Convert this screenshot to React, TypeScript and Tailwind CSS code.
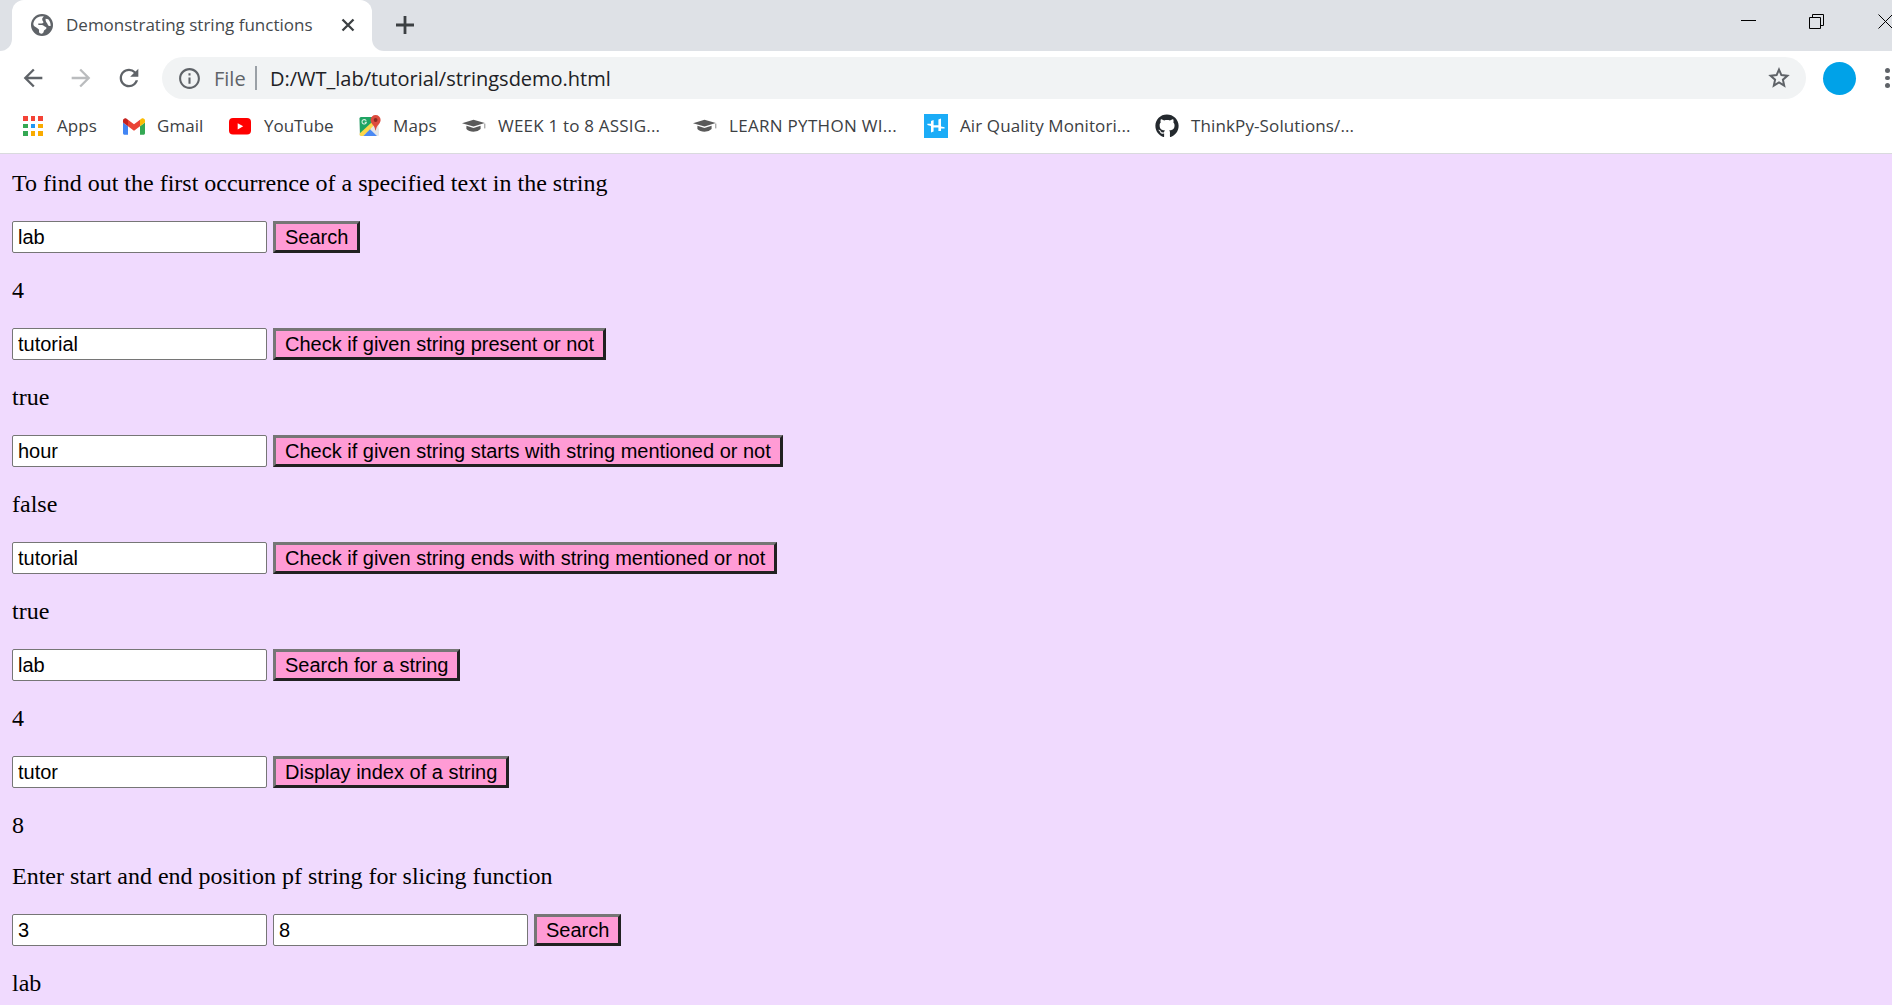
import React from "react";
import {
  MdArrowBack,
  MdArrowForward,
  MdRefresh,
  MdInfoOutline,
} from "react-icons/md";
import { FaGithub } from "react-icons/fa";

const GlobeIcon = () => (
  <svg viewBox="0 0 22 22" className="h-[22px] w-[22px]">
    <circle cx="11" cy="11" r="11" fill="#5f6368" />
    <path
      d="M2.3 10C2.6 6.4 5.4 3.2 9 2.4L12.8 2.3C12.2 3.4 11.2 4 11.2 5.2C11.2 7 12.4 7 12.4 8.2C12.4 9.4 11 9.4 9.4 9.4H7.6C6.8 9.4 7 11 8 11H10.8C12.6 11 12.8 12.4 14.2 12.8C16 13.4 15.8 14.8 14.4 15.6C13 16.2 12.8 16.8 12.6 18.2L11 19.8C8.8 19.6 7.8 18.8 8 17.2C8.2 15.6 8 15.2 6.4 14.2C4.6 13 2.4 12.2 2.3 10Z"
      fill="#fff"
    />
    <path d="M14.6 4.8L17.2 5.2C19 7.2 19.8 9.4 19.6 12C18 12 16.8 11.6 16.6 10.2C16.4 8.8 14.2 8 14.6 4.8Z" fill="#fff" />
  </svg>
);

const AppsIcon = () => (
  <span className="grid h-[20px] w-[20px] grid-cols-3 gap-[3px]">
    <i className="bg-[#f44336]" />
    <i className="bg-[#f44336]" />
    <i className="bg-[#f44336]" />
    <i className="bg-[#34a853]" />
    <i className="bg-[#2196f3]" />
    <i className="bg-[#f9ab00]" />
    <i className="bg-[#34a853]" />
    <i className="bg-[#f9ab00]" />
    <i className="bg-[#f9ab00]" />
  </span>
);

const GmailIcon = () => (
  <svg viewBox="52 42 88 66" className="h-[17px] w-[22px]">
    <path fill="#4285f4" d="M58 108h14V74L52 59v43c0 3.32 2.69 6 6 6" />
    <path fill="#34a853" d="M120 108h14c3.32 0 6-2.69 6-6V59l-20 15" />
    <path fill="#fbbc04" d="M120 48v26l20-15v-8c0-7.42-8.47-11.65-14.4-7.2" />
    <path fill="#ea4335" d="M72 74V48l24 18 24-18v26L96 92" />
    <path fill="#c5221f" d="M52 51v8l20 15V48l-5.6-4.2c-5.94-4.45-14.4-.22-14.4 7.2" />
  </svg>
);

const YouTubeIcon = () => (
  <svg viewBox="0 0 22 17" className="h-[17px] w-[22px]">
    <rect width="22" height="16.5" rx="4" fill="#f00" />
    <path d="M8.7 5.2L14.2 8.3L8.7 11.4Z" fill="#fff" />
  </svg>
);

const MapsIcon = () => (
  <svg viewBox="0 0 22 22" className="h-[22px] w-[22px]">
    <rect x="0.5" y="2" width="19" height="19" rx="1.5" fill="#e4e6e8" />
    <path d="M0.5 3.5Q0.5 2 2 2H13.5L14.5 7L1 20Z" fill="#1fa463" />
    <path d="M0.6 18.6L12.6 7.4L15.4 10.4L4.6 21H2Q0.6 21 0.6 19.6Z" fill="#fdd74a" />
    <path d="M4.4 21L11 14.2L18 21Z" fill="#4a89f3" />
    <path d="M11.6 13.6L15 10.2L20 14V20.4L18.8 21Z" fill="#e4e6e8" />
    <path d="M7.2 5.8A2.2 2.2 0 1 0 7.4 7.2H5.6" fill="none" stroke="#d5eee0" strokeWidth="1.1" />
    <path d="M16.6 0A5 5 0 0 0 11.6 5C11.6 9 15.8 10 16.4 15.5H16.8C17.4 10 21.6 9 21.6 5A5 5 0 0 0 16.6 0Z" fill="#dc4b3e" />
    <circle cx="16.6" cy="5" r="1.9" fill="#8a2a22" />
  </svg>
);

const CapIcon = () => (
  <svg viewBox="0 0 24 14" className="h-[14px] w-[24px]">
    <path d="M0 4.2L11.5 0.7L22.8 4L11.5 7.6Z" fill="#5a5a5a" />
    <path d="M4.4 6.8L11.5 9L18.6 6.8V10Q16 12.8 11.5 12.8Q7 12.8 4.4 10Z" fill="#5a5a5a" />
    <path d="M22.8 4.6V9.4" stroke="#8a8a8a" strokeWidth="1" />
  </svg>
);

const HacksterIcon = () => (
  <svg viewBox="0 0 24 24" className="h-6 w-6">
    <rect width="24" height="24" fill="#1bacf7" />
    <path
      d="M7 7L9.6 6V11.2H14.4V5.6L17 4.6V12.4L20.6 13.2V14.4H17V17H14.4V13.6H9.6V17.4L7 18.6V12L3.4 11V9.8H7Z"
      fill="#fff"
    />
  </svg>
);

const StarIcon = ({ className }: { className: string }) => (
  <svg viewBox="0 0 22 22" className={className} fill="none" stroke="#5f6368" strokeWidth="2">
    <path d="M11 2.6L13.4 8.1L19.4 8.7L14.9 12.7L16.2 18.6L11 15.5L5.8 18.6L7.1 12.7L2.6 8.7L8.6 8.1Z" />
  </svg>
);

type Bookmark = { icon: React.ReactNode; label: string; box: string; text: string };

const bookmarks: Bookmark[] = [
  { icon: <AppsIcon />, label: "Apps", box: "w-[100px]", text: "-ml-px tracking-[0.1px]" },
  { icon: <GmailIcon />, label: "Gmail", box: "w-[106px]", text: "-ml-px tracking-[0.05px]" },
  { icon: <YouTubeIcon />, label: "YouTube", box: "w-[130px]", text: "tracking-[-0.05px]" },
  { icon: <MapsIcon />, label: "Maps", box: "w-[103px]", text: "-ml-px tracking-[0.1px]" },
  { icon: <CapIcon />, label: "WEEK 1 to 8 ASSIG...", box: "w-[231px]", text: "ml-px tracking-[0.2px]" },
  { icon: <CapIcon />, label: "LEARN PYTHON WI...", box: "w-[231px]", text: "ml-px tracking-[0.3px]" },
  { icon: <HacksterIcon />, label: "Air Quality Monitori...", box: "w-[231px]", text: "ml-px tracking-[0.1px]" },
  { icon: <FaGithub className="h-6 w-6 text-[#24292e]" />, label: "ThinkPy-Solutions/...", box: "w-[231px]", text: "ml-px tracking-[0.12px]" },
];

const TabStrip = () => (
  <div className="flex h-[51px] bg-[#dee1e6]">
    <div className="w-3 bg-white">
      <div className="h-full rounded-br-[12px] bg-[#dee1e6]" />
    </div>
    <div className="w-[360px] rounded-t-[12px] bg-white">
      <div className="flex h-[49px] items-center pl-[19px]">
        <GlobeIcon />
        <span className="ml-[13px] w-[275px] whitespace-nowrap text-[17px] leading-6 text-[#45494d]">
          Demonstrating string functions
        </span>
        <svg viewBox="0 0 14 14" className="h-[14px] w-[14px]">
          <path d="M1.5 1.5L12.5 12.5M12.5 1.5L1.5 12.5" stroke="#3c4043" strokeWidth="2.3" />
        </svg>
      </div>
    </div>
    <div className="w-[24px] bg-white">
      <div className="h-full rounded-bl-[12px] bg-[#dee1e6]" />
    </div>
    <svg viewBox="0 0 18 18" className="mt-4 h-[18px] w-[18px]">
      <path d="M9 0V18M0 9H18" stroke="#3c4043" strokeWidth="2.8" />
    </svg>
    <div className="ml-auto flex h-[43px] w-[151px] items-center gap-[53px] overflow-hidden">
      <svg viewBox="0 0 15 15" className="h-[15px] w-[15px] shrink-0">
        <path d="M0 6.5H15" stroke="#000" />
      </svg>
      <svg viewBox="0 0 15 15" className="h-[15px] w-[15px] shrink-0" fill="none" stroke="#000">
        <path d="M0.5 3.5H11.5V14.5H0.5ZM3.5 3.5V0.5H14.5V11.5H11.5" />
      </svg>
      <svg viewBox="0 0 15 15" className="ml-px h-[15px] w-[15px] shrink-0">
        <path d="M0.5 0.5L14.5 14.5M14.5 0.5L0.5 14.5" stroke="#000" />
      </svg>
    </div>
  </div>
);

const Toolbar = () => (
  <div className="flex h-[54px] items-center pl-[19px] text-[#5f6368]">
    <MdArrowBack className="h-7 w-7" />
    <MdArrowForward className="ml-5 h-7 w-7 text-[#babcbe]" />
    <MdRefresh className="ml-5 h-7 w-7" />
    <div className="ml-[19px] flex h-[42px] w-[1644px] items-center rounded-full bg-[#f1f3f4] pl-[15px] pr-4">
      <MdInfoOutline className="h-[25px] w-[25px]" />
      <span className="ml-3 mt-[2px] w-[41px] text-[20px] leading-6">File</span>
      <span className="h-6 w-[2px] bg-[#9aa0a6]" />
      <span className="ml-[13px] mt-[2px] whitespace-nowrap text-[20px] leading-6 tracking-[-0.01px] text-[#202124]">
        D:/WT_lab/tutorial/stringsdemo.html
      </span>
      <StarIcon className="ml-auto h-[22px] w-[22px]" />
    </div>
    <span className="ml-[17px] h-[33px] w-[33px] rounded-full bg-[#00a2e8]" />
    <span className="ml-[29px] flex flex-col gap-[3px]">
      <i className="h-[4.5px] w-[4.5px] rounded-full bg-[#5f6368]" />
      <i className="h-[4.5px] w-[4.5px] rounded-full bg-[#5f6368]" />
      <i className="h-[4.5px] w-[4.5px] rounded-full bg-[#5f6368]" />
    </span>
  </div>
);

const BookmarksBar = () => (
  <div className="flex h-[49px] items-center border-b border-[#d9dadd] pb-[6px] pl-[23px]">
    {bookmarks.map((b) => (
      <div key={b.label} className={`flex shrink-0 items-center ${b.box}`}>
        <span className="flex w-[35px] shrink-0 items-center">{b.icon}</span>
        <span className={`whitespace-nowrap text-[17px] leading-6 text-[#3c4043] ${b.text}`}>{b.label}</span>
      </div>
    ))}
  </div>
);

const Field = ({ value }: { value: string }) => (
  <input
    defaultValue={value}
    className="h-8 w-[255px] rounded-[2px] border border-[#767676] bg-white px-[5px] text-[20px] leading-6 text-black"
  />
);

const Action = ({ label }: { label: string }) => (
  <button className="h-8 whitespace-nowrap border-[3px] border-b-[#212121] border-l-[#767676] border-r-[#212121] border-t-[#767676] bg-[#ff9bd5] px-[9px] text-[20px] leading-[26px] text-black">
    {label}
  </button>
);

const Row = ({ values, label }: { values: string[]; label: string }) => (
  <div className="mt-6 flex gap-[6px] font-['Liberation_Sans',sans-serif]">
    {values.map((v) => (
      <Field key={v} value={v} />
    ))}
    <Action label={label} />
  </div>
);

const checks = [
  { value: "lab", label: "Search", result: "4" },
  { value: "tutorial", label: "Check if given string present or not", result: "true" },
  { value: "hour", label: "Check if given string starts with string mentioned or not", result: "false" },
  { value: "tutorial", label: "Check if given string ends with string mentioned or not", result: "true" },
  { value: "lab", label: "Search for a string", result: "4" },
  { value: "tutor", label: "Display index of a string", result: "8" },
];

export default function App() {
  return (
    <div className="flex h-[1005px] w-[1892px] flex-col overflow-hidden bg-white">
      <header className="shrink-0 font-['Open_Sans',sans-serif]">
        <TabStrip />
        <Toolbar />
        <BookmarksBar />
      </header>
      <main className="flex-1 bg-[#f0dafe] pl-3 pt-4 font-['Liberation_Serif',serif] text-[24px] leading-[27px] text-black">
        <p>To find out the first occurrence of a specified text in the string</p>
        {checks.map((c, i) => (
          <section key={i}>
            <Row values={[c.value]} label={c.label} />
            <p className="mt-6">{c.result}</p>
          </section>
        ))}
        <p className="mt-6">Enter start and end position pf string for slicing function</p>
        <Row values={["3", "8"]} label="Search" />
        <p className="mt-6">lab</p>
      </main>
    </div>
  );
}
